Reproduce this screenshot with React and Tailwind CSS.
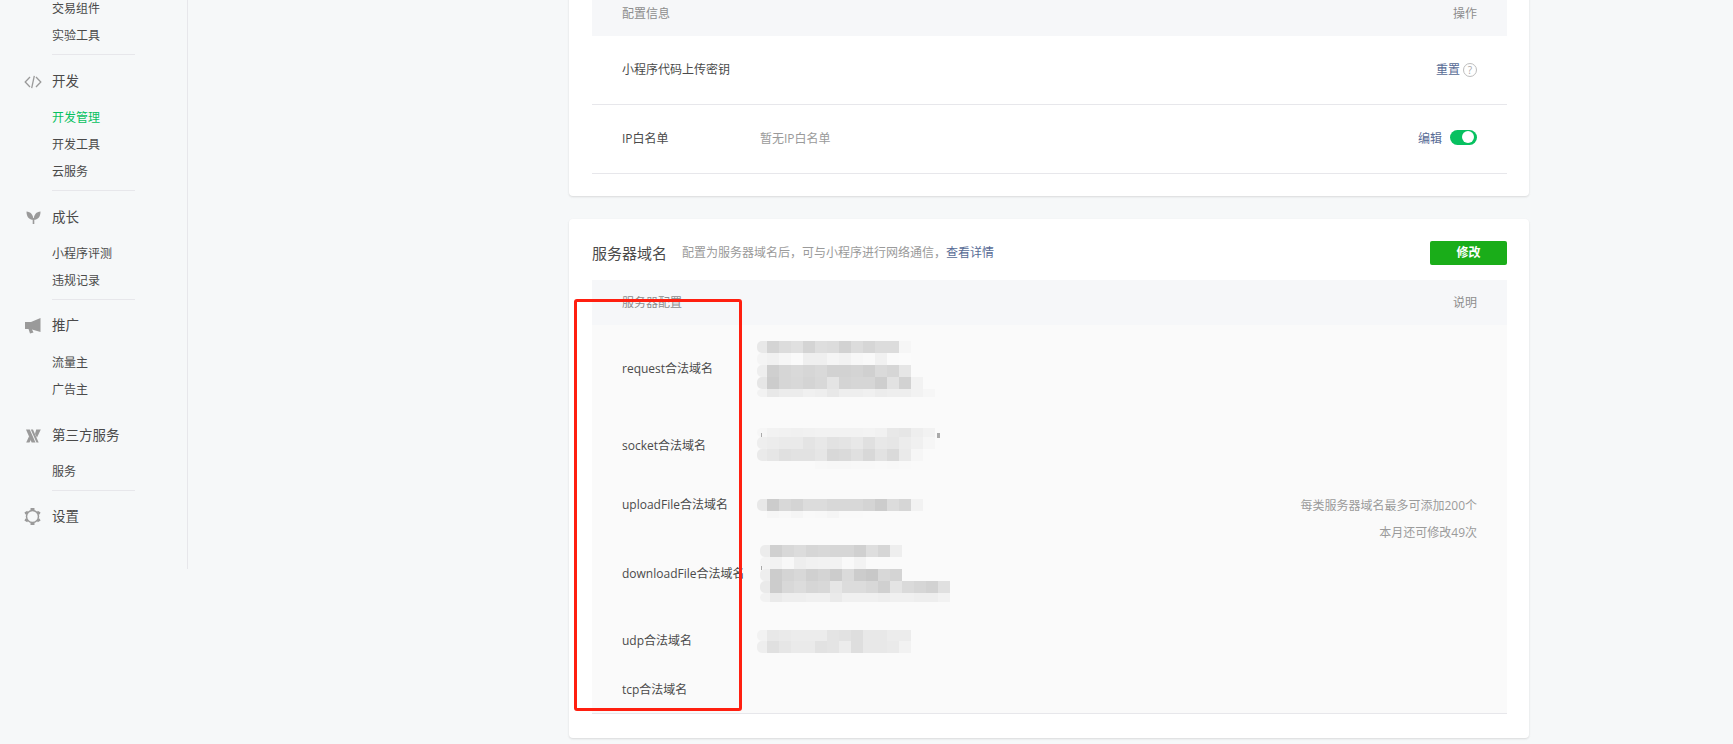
import React from "react";

const FONT = '"Open Sans", "Noto Sans CJK SC", sans-serif';

// blurred-out domain lists: each row is [height, cap grey, ...12px cell greys]
const MOSAICS = {
  request: [
    [12, "e8", "d4", "dc", "e0", "d4", "de", "dc", "d2", "dc", "d6", "dc", "dc", "f6"],
    [12, "f4", "f1", "f6", "fa", "ef", "ef", "f5", "f2", "f7", "f9", "f1", "fa", "fb"],
    [12, "ee", "cf", "d6", "d9", "d6", "d9", "d2", "d2", "d4", "d0", "da", "d6", "e6"],
    [12, "e6", "cc", "d6", "d8", "d4", "d8", "e4", "d4", "d6", "d6", "ce", "e2", "d2", "f2"],
    [8, "f2", "e8", "ec", "ec", "f0", "ee", "e8", "ee", "ee", "f0", "ec", "ee", "ee", "f2", "f6"],
  ],
  socket: [
    [9, "f6", "f2", "f1", "f0", "f1", "f2", "f2", "f2", "f2", "f3", "f1", "e8", "e6", "ee", "f2"],
    [12, "ee", "ec", "ea", "ea", "e4", "e8", "e2", "e4", "e8", "e0", "e8", "e6", "ec", "f0", "f6"],
    [12, "ea", "e6", "e0", "e2", "e2", "e6", "d8", "da", "e0", "d8", "e2", "da", "ea", "f6"],
    [8, "fa", "fa", "fa", "fa", "fa", "f8", "f7", "f7", "f8", "f8", "f9", "f8", "f9", "fa"],
  ],
  upload: [
    [12, "e8", "cc", "d8", "d4", "dc", "dc", "d8", "d8", "d8", "d4", "cc", "dc", "d6", "f2"],
    [7, "fa", "f6", "f8", "f5", "f9", "f8", "f5", "f9", "f9", "fa"],
  ],
  download: [
    [12, "ec", "d0", "d8", "dc", "d6", "d8", "d6", "d6", "d0", "de", "d6", "ee"],
    [12, "f4", "f2", "f8", "ee", "f1", "f2", "f2", "f9", "f3", "fa", "fa", "fa", "fa"],
    [12, "ee", "cc", "d4", "d8", "d0", "d4", "cc", "da", "cc", "c8", "d8", "d4"],
    [12, "ea", "cc", "d8", "dc", "d6", "d8", "e6", "dc", "dc", "d8", "d0", "e4", "da", "d6", "d2", "e0", "f6"],
    [9, "f2", "ea", "ee", "ee", "f0", "f0", "ea", "f0", "f0", "f0", "ee", "f0", "f0", "ee", "ee", "f2"],
  ],
  udp: [
    [11, "f2", "e8", "ea", "ec", "ec", "ec", "e4", "e2", "de", "e8", "e8", "ec", "ec"],
    [12, "ee", "e0", "e6", "ea", "ea", "e2", "e4", "ec", "de", "e8", "e8", "ea", "f2"],
  ],
};

// bits of text that stick out from under the blur: [x, y, w, h]
const MARKS = {
  socket: [[4, 5, 1, 4], [180, 5, 3, 5]],
  download: [[1, 21, 1, 4]],
};

const Mosaic = ({ name, shift = 0 }) => {
  const rows = MOSAICS[name];
  let y = 0;
  const total = rows.reduce((sum, r) => sum + r[0], 0);
  return (
    <svg width="190" height={total} className="block" style={{ marginLeft: shift }}>
      {rows.map(([h, cap, ...cells], i) => {
        const top = y;
        y += h;
        return (
          <g key={i}>
            <rect x="0" y={top} width="14" height={h} rx="5" fill={`#${cap}${cap}${cap}`} />
            {cells.map((c, j) => (
              <rect key={j} x={10 + j * 12} y={top} width="12" height={h} fill={`#${c}${c}${c}`} />
            ))}
          </g>
        );
      })}
      {(MARKS[name] || []).map(([mx, my, mw, mh], i) => (
        <rect key={i} x={mx} y={my} width={mw} height={mh} fill="#aaaaaa" />
      ))}
    </svg>
  );
};

const CodeIcon = () => (
  <svg width="18" height="14" viewBox="0 0 18 14" fill="none" stroke="#9a9a9a" strokeWidth="1.3">
    <path d="M6 2 1.2 7 6 12" />
    <path d="M12 2 16.8 7 12 12" />
    <path d="M10.3 .8 7.7 13.2" />
  </svg>
);

const SproutIcon = () => (
  <svg width="16" height="13" viewBox="0 0 16 13" fill="#9a9a9a" className="ml-[2px]">
    <path d="M.5 .5C4.500 .8 7.300 3.500 7.300 8.800 3 8.800 .5 6 .5 .5z" />
    <path d="M14.500 .5C10.500 .8 7.700 3.500 7.700 8.800 12 8.800 14.500 6 14.500 .5z" />
    <rect x="6.700" y="7" width="1.600" height="6" />
  </svg>
);

const MegaphoneIcon = () => (
  <svg width="16" height="16" viewBox="0 0 16 16" fill="#9a9a9a" className="ml-[1px]">
    <path d="M15.500 0V14L7 11.500 8.500 14.500 5 15.500 3.500 11H0V4H6z" />
  </svg>
);

const ThirdPartyIcon = () => (
  <svg width="15" height="14" viewBox="0 0 15 14" fill="#9a9a9a" className="ml-[2px]">
    <path d="M0 .5h3.800L9.500 13.500H5.700z" />
    <path d="M4.800 .5h2.200L12.700 13.500H10.500z" />
    <path d="M10.200 .5H14.800L11 8.500 9 5z" />
    <path d="M0.200 13.500 3.200 7 5 10.500 3.500 13.500z" />
  </svg>
);

const GearIcon = () => (
  <svg width="17" height="17" viewBox="0 0 17 17" fill="none" stroke="#9a9a9a">
    <circle cx="8.500" cy="8.500" r="6" strokeWidth="1.500" />
    <g fill="#9a9a9a" stroke="none">
      <rect x="6.500" y="0" width="4" height="2.500" rx=".5" />
      <rect x="6.500" y="14.500" width="4" height="2.500" rx=".5" />
      <rect x="0.700" y="3.400" width="3.400" height="2.500" rx=".5" transform="rotate(-30 2.400 4.600)" />
      <rect x="12.900" y="3.400" width="3.400" height="2.500" rx=".5" transform="rotate(30 14.600 4.600)" />
      <rect x="0.700" y="11.100" width="3.400" height="2.500" rx=".5" transform="rotate(30 2.400 12.400)" />
      <rect x="12.900" y="11.100" width="3.400" height="2.500" rx=".5" transform="rotate(-30 14.600 12.400)" />
    </g>
  </svg>
);

const SubItem = ({ label, active }) => (
  <div className={`h-[27px] pl-[52px] text-[12px] leading-[27px] ${active ? "text-[#07c160]" : "text-[#4a4a4a]"}`}>
    {label}
  </div>
);

const NavGroup = ({ icon, title, items, active, noLine, lift }) => (
  <div>
    <div className={`h-[36px] flex items-start text-[13.5px] leading-[27px] text-[#4a4a4a] ${lift ? "pt-[12px] pb-[1px] box-content" : "pt-[13px] box-content"}`}>
      <div className="w-[52px] h-[27px] pl-[24px] flex items-center">{icon}</div>
      {title}
    </div>
    <div className="pb-[5px]">
      {items.map((label) => (
        <SubItem key={label} label={label} active={label === active} />
      ))}
    </div>
    {items.length > 0 && (
      <div className={`ml-[52px] w-[83px] h-px ${noLine ? "" : "bg-[#e7e7eb]"}`} />
    )}
  </div>
);

const Sidebar = () => (
  <aside className="w-[188px] h-[569px] shrink-0 border-r border-[#e7e7eb] overflow-hidden">
    <div className="-mt-[5px]">
      <div className="pb-[5px]">
        <SubItem label="交易组件" />
        <SubItem label="实验工具" />
      </div>
      <div className="ml-[52px] w-[83px] h-px bg-[#e7e7eb]" />
      <NavGroup icon={<CodeIcon />} title="开发" items={["开发管理", "开发工具", "云服务"]} active="开发管理" />
      <NavGroup icon={<SproutIcon />} title="成长" items={["小程序评测", "违规记录"]} />
      <NavGroup icon={<MegaphoneIcon />} title="推广" items={["流量主", "广告主"]} noLine lift />
      <NavGroup icon={<ThirdPartyIcon />} title="第三方服务" items={["服务"]} />
      <NavGroup icon={<GearIcon />} title="设置" items={[]} lift />
    </div>
  </aside>
);

const TableHead = ({ left, right }) => (
  <div className="h-[45px] px-[30px] bg-[#f6f7f9] flex items-center justify-between text-[12px] text-[#8d8d8d]">
    <span>{left}</span>
    <span>{right}</span>
  </div>
);

const ConfigRow = ({ label, value, children }) => (
  <div className="h-[69px] px-[30px] border-b border-[#e7e7eb] flex items-center text-[12px]">
    <span className="w-[138px] text-[#4a4a4a]">{label}</span>
    <span className="flex-1 text-[#9a9a9a]">{value}</span>
    {children}
  </div>
);

const DOMAIN_ROWS = [
  { label: "request合法域名", h: "h-[88px]", mosaic: "request" },
  { label: "socket合法域名", h: "h-[65px]", mosaic: "socket", pt: "pt-[6px]" },
  { label: "uploadFile合法域名", h: "h-[54px]", mosaic: "upload", pt: "pt-[7px]" },
  { label: "downloadFile合法域名", h: "h-[83px]", mosaic: "download", shift: 3 },
  { label: "udp合法域名", h: "h-[52px]", mosaic: "udp" },
  { label: "tcp合法域名", h: "h-[46px]" },
];

const DomainRow = ({ label, h, mosaic, pt = "", shift = 0 }) => (
  <div className={`${h} flex items-center text-[12px] text-[#4a4a4a]`}>
    <span className="w-[135px] shrink-0 whitespace-nowrap">{label}</span>
    <div className={pt}>{mosaic && <Mosaic name={mosaic} shift={shift} />}</div>
  </div>
);

export default function App() {
  return (
    <div className="h-[744px] overflow-hidden bg-[#f6f8f9] flex" style={{ fontFamily: FONT }}>
      <Sidebar />
      <main className="ml-[381px] w-[960px] -mt-[9px]">
        <section className="bg-white rounded-[4px] shadow-[0_1px_2px_rgba(150,150,150,0.3)] pl-[23px] pr-[22px] pb-[22px]">
          <TableHead left="配置信息" right="操作" />
          <ConfigRow label="小程序代码上传密钥">
            <a className="text-[#576b95]">重置</a>
            <span className="ml-[3px] w-[14px] h-[14px] rounded-full border border-[#bdbdbd] text-[#a8a8a8] text-[10px] leading-[12px] text-center">?</span>
          </ConfigRow>
          <ConfigRow label="IP白名单" value="暂无IP白名单">
            <a className="text-[#576b95]">编辑</a>
            <span className="ml-[8px] -mt-[4px] w-[27px] h-[15px] rounded-full bg-[#07c160] flex items-center justify-end pr-[3px]">
              <span className="w-[12px] h-[12px] rounded-full bg-white" />
            </span>
          </ConfigRow>
        </section>

        <section className="relative mt-[23px] bg-white rounded-[4px] shadow-[0_1px_2px_rgba(150,150,150,0.3)] pl-[23px] pr-[22px] pt-[22px] pb-[24px]">
          <div className="flex items-center h-[24px] mb-[15px]">
            <h2 className="text-[15px] font-normal text-[#4a4a4a]">服务器域名</h2>
            <p className="ml-[15px] text-[12px] text-[#9a9a9a]">
              配置为服务器域名后，可与小程序进行网络通信，
              <a className="text-[#576b95]">查看详情</a>
            </p>
            <button className="ml-auto w-[77px] h-[24px] rounded-[2px] bg-[#1aad19] text-white text-[12px] font-semibold">修改</button>
          </div>
          <TableHead left="服务器配置" right="说明" />
          <div className="bg-[#fafafa] border-b border-[#e7e7eb] pl-[30px] pr-[30px] flex justify-between">
            <div>
              {DOMAIN_ROWS.map((row) => (
                <DomainRow key={row.label} {...row} />
              ))}
            </div>
            <div className="self-center text-right text-[12px] leading-[27px] text-[#9a9a9a]">
              <p>每类服务器域名最多可添加200个</p>
              <p>本月还可修改49次</p>
            </div>
          </div>
          {/* red annotation box on top of the table */}
          <div className="absolute left-[5px] top-[80px] w-[168px] h-[412px] border-[3px] border-[#ff1f10] rounded-[3px]" />
        </section>
      </main>
    </div>
  );
}
